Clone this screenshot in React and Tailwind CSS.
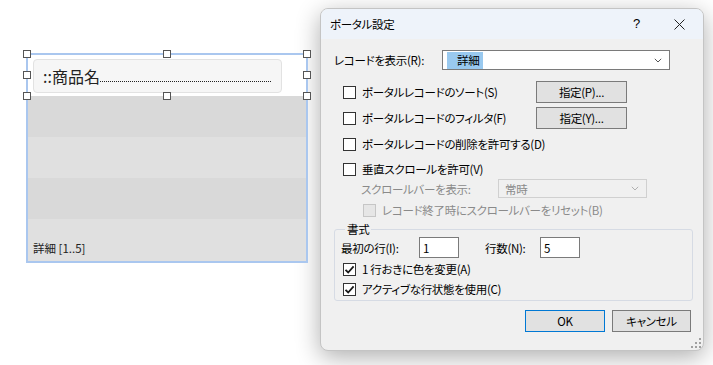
import React from 'react';

const font = "font-['Noto_Sans_CJK_JP','Noto_Sans',sans-serif] [font-feature-settings:'palt'] text-[11.5px] tracking-[-0.3px] leading-[16px]";

function Box({ checked, disabled }) {
    return (
        <span className={`flex h-[13px] w-[13px] shrink-0 items-center justify-center border ${disabled ? 'border-[#c6c6c6] bg-[#e6e6e6]' : 'border-[#333333] bg-white'}`}>
            {checked && (
                <svg width="11" height="11" viewBox="0 0 11 11">
                    <path d="M1.5 5.8 L4.2 8.5 L9.6 2.4" fill="none" stroke="#1a1a1a" strokeWidth="1.8" />
                </svg>
            )}
        </span>
    );
}

function Check({ label, checked, disabled, className = '' }) {
    return (
        <div className={`flex items-center gap-[6px] ${className}`}>
            <Box checked={checked} disabled={disabled} />
            <span className={disabled ? 'text-[#8a8a8a]' : 'text-black'}>{label}</span>
        </div>
    );
}

function Chevron({ color = '#555' }) {
    return (
        <svg width="8" height="5" viewBox="0 0 8 5">
            <path d="M0.8 0.8 L4 4 L7.2 0.8" fill="none" stroke={color} strokeWidth="1" />
        </svg>
    );
}

function Handle({ className }) {
    return <span className={`absolute h-[8px] w-[8px] border border-[#555] bg-white ${className}`} />;
}

function Portal() {
    return (
        <div className="relative ml-[26px] mt-[53px] h-[210px] w-[282px] shrink-0 border-2 border-[#aac7ef] bg-white">
            <div className="h-[41px] bg-white px-[5px] pt-[4px]">
                <div className="flex h-[34px] w-[249px] items-center rounded-[4px] border border-[#e2e2e2] bg-[#f6f6f6] pl-[9px] pr-[10px]">
                    <span className="font-['Noto_Sans_CJK_JP',sans-serif] text-[16px] leading-[18px] text-[#222]">::商品名</span>
                    <span className="mt-[10px] flex-1 border-b border-dotted border-[#222]" />
                </div>
            </div>
            <div className="h-[41px] bg-[#d9d9d9]" />
            <div className="h-[41px] bg-[#e0e0e0]" />
            <div className="h-[41px] bg-[#d9d9d9]" />
            <div className="flex h-[42px] items-end bg-[#e0e0e0] pb-[6px] pl-[5px]">
                <span className="font-['Noto_Sans_CJK_JP',sans-serif] text-[11.5px] leading-[14px] text-[#222]">詳細 [1..5]</span>
            </div>
            <Handle className="left-[-5px] top-[-5px]" />
            <Handle className="left-[135px] top-[-5px]" />
            <Handle className="right-[-5px] top-[-5px]" />
            <Handle className="left-[-5px] top-[16px]" />
            <Handle className="right-[-5px] top-[16px]" />
            <Handle className="left-[-5px] top-[37px]" />
            <Handle className="left-[135px] top-[37px]" />
            <Handle className="right-[-5px] top-[37px]" />
        </div>
    );
}

function Btn({ children, primary, className = '' }) {
    return (
        <div className={`flex h-[22px] items-center justify-center bg-[#e1e1e1] border ${primary ? 'border-[#0078d4]' : 'border-[#7a7a7a]'} ${className}`}>
            {children}
        </div>
    );
}

function Dialog() {
    return (
        <div className={`ml-[12px] mt-[8px] flex h-[343px] w-[384px] shrink-0 flex-col overflow-hidden rounded-[8px] border border-[#c4c4c4] bg-[#f0f0f0] shadow-[0_6px_24px_rgba(0,0,0,0.32)] ${font}`}>
            <div className="flex h-[30px] shrink-0 items-center bg-[#eef3fa] pl-[9px]">
                <span className="flex-1 text-black">ポータル設定</span>
                <span className="mr-[34px] font-['Liberation_Sans',sans-serif] text-[13px]">?</span>
                <svg className="mr-[18px]" width="11" height="11" viewBox="0 0 11 11">
                    <path d="M0.5 0.5 L10.5 10.5 M10.5 0.5 L0.5 10.5" stroke="#222" strokeWidth="1" />
                </svg>
            </div>
            <div className="relative flex flex-1 flex-col pl-[13px]">
                <div className="mt-[11px] flex h-[20px] items-center">
                    <span className="w-[108px]">レコードを表示(R):</span>
                    <div className="flex h-[20px] w-[228px] items-center border border-[#7a7a7a] bg-white pl-[4px] pr-[7px]">
                        <span className="bg-[#99c9ef] pl-[10px] pr-[4px] leading-[17px]">詳細</span>
                        <span className="flex-1" />
                        <Chevron />
                    </div>
                </div>
                <div className="mt-[11px] flex h-[22px] items-center pl-[9px]">
                    <Check label="ポータルレコードのソート(S)" className="w-[193px]" />
                    <Btn className="w-[91px]">指定(P)...</Btn>
                </div>
                <div className="mt-[4px] flex h-[22px] items-center pl-[9px]">
                    <Check label="ポータルレコードのフィルタ(F)" className="w-[193px]" />
                    <Btn className="w-[91px]">指定(Y)...</Btn>
                </div>
                <div className="mt-[5px] flex h-[20px] items-center pl-[9px]">
                    <Check label="ポータルレコードの削除を許可する(D)" />
                </div>
                <div className="mt-[5px] flex h-[20px] items-center pl-[9px]">
                    <Check label="垂直スクロールを許可(V)" />
                </div>
                <div className="flex h-[19px] items-center pl-[27px]">
                    <span className="w-[137px] text-[#8a8a8a]">スクロールバーを表示:</span>
                    <div className="flex h-[19px] w-[149px] items-center border border-[#d0d0d0] bg-[#f0f0f0] pl-[6px] pr-[7px] text-[#8a8a8a]">
                        <span className="flex-1">常時</span>
                        <Chevron color="#b0b0b0" />
                    </div>
                </div>
                <div className="mt-[3px] flex h-[18px] items-center pl-[29px]">
                    <Check label="レコード終了時にスクロールバーをリセット(B)" disabled />
                </div>
                <fieldset className="mr-[10px] mt-[2px] rounded-[3px] border border-[#d6dbe4] pb-[1px] pl-[6px]">
                    <legend className="ml-[4px] px-[2px]">書式</legend>
                    <div className="flex h-[21px] items-center">
                        <span className="w-[78px]">最初の行(I):</span>
                        <div className="flex h-[21px] w-[40px] items-center border border-[#7a7a7a] bg-white pl-[3px]">1</div>
                        <span className="ml-[26px] w-[55px]">行数(N):</span>
                        <div className="flex h-[21px] w-[40px] items-center border border-[#7a7a7a] bg-white pl-[3px]">5</div>
                    </div>
                    <div className="mt-[1px] flex h-[20px] items-center pl-[2px]">
                        <Check label="1 行おきに色を変更(A)" checked />
                    </div>
                    <div className="flex h-[20px] items-center pl-[2px]">
                        <Check label="アクティブな行状態を使用(C)" checked />
                    </div>
                </fieldset>
                <div className="mt-[9px] flex justify-end gap-[7px] pr-[12px]">
                    <Btn primary className="w-[80px]">OK</Btn>
                    <Btn className="w-[79px]">キャンセル</Btn>
                </div>
                <svg className="absolute bottom-[2px] right-[2px]" width="10" height="10" viewBox="0 0 10 10">
                    <g fill="#a0a0a0">
                        <rect x="8" y="0" width="2" height="2" />
                        <rect x="4" y="4" width="2" height="2" />
                        <rect x="8" y="4" width="2" height="2" />
                        <rect x="0" y="8" width="2" height="2" />
                        <rect x="4" y="8" width="2" height="2" />
                        <rect x="8" y="8" width="2" height="2" />
                    </g>
                </svg>
            </div>
        </div>
    );
}

export default function App() {
    return (
        <div className="flex h-[365px] w-[713px] overflow-hidden bg-white">
            <Portal />
            <Dialog />
        </div>
    );
}
